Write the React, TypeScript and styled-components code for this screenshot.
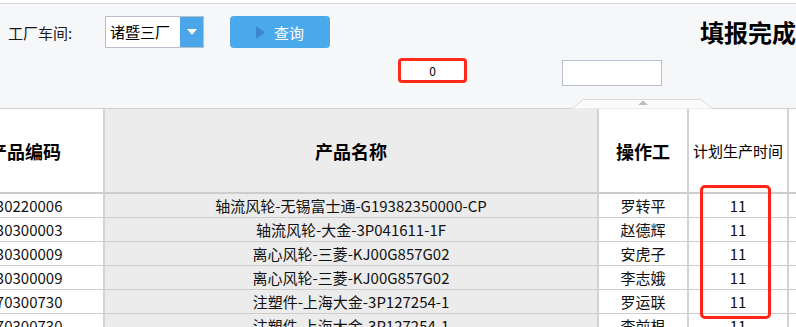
import React from 'react';
import styled, { createGlobalStyle } from 'styled-components';

const Global = createGlobalStyle`
  html, body { margin: 0; padding: 0; background: #ffffff; overflow: hidden; }
  body { font-family: "Noto Sans CJK SC", "Noto Sans", sans-serif; color: #111; }
`;

const Page = styled.div`
  position: relative;
  width: 796px;
  height: 327px;
  overflow: hidden;
  padding-top: 3px;
  box-sizing: border-box;
`;

const Panel = styled.div`
  position: relative;
  height: 106px;
  box-sizing: border-box;
  border-top: 1px solid #d6d8dd;
  border-bottom: 1px solid #cfcfcf;
  background: #f6f7f9;
  padding: 12px 0 0 8px;
  display: flex;
  flex-direction: column;
  gap: 10px;
`;

const TopRow = styled.div`
  display: flex;
  align-items: center;
  height: 32px;
  & > * { flex-shrink: 0; }
`;

const Label = styled.span`
  width: 97px;
  font-size: 15px;
  color: #1a1a1a;
  white-space: nowrap;
`;

const Select = styled.div`
  display: flex;
  width: 99px;
  height: 32px;
  box-sizing: border-box;
  border: 1px solid #b7bccb;
  background: #fff;
`;

const SelectText = styled.span`
  flex: 1;
  padding-left: 4px;
  font-size: 15px;
  line-height: 30px;
  color: #000;
  white-space: nowrap;
`;

const SelectArrow = styled.span`
  width: 23px;
  background: #4aa6e9;
  display: flex;
  align-items: center;
  justify-content: center;
`;

const QueryButton = styled.button`
  margin-left: 26px;
  width: 100px;
  height: 32px;
  border: none;
  border-radius: 4px;
  background: #4aa9ea;
  display: flex;
  align-items: center;
  justify-content: center;
  gap: 9px;
  padding: 0;
  font-family: inherit;
  font-size: 15px;
  color: #fff;
`;

const Heading = styled.h1`
  margin: 0 0 0 370px;
  font-size: 24px;
  font-weight: 700;
  color: #000;
  white-space: nowrap;
  line-height: 32px;
`;

const SecondRow = styled.div`
  display: flex;
  align-items: flex-start;
  padding-left: 390px;
  & > * { flex-shrink: 0; }
`;

const CountField = styled.div`
  width: 69px;
  height: 25px;
  box-sizing: border-box;
  border: 3px solid #ff2a1a;
  border-radius: 4px;
  background: #fff;
  font-size: 12px;
  line-height: 19px;
  text-align: center;
  color: #000;
`;

const BlankField = styled.div`
  margin-left: 95px;
  margin-top: 2px;
  width: 100px;
  height: 26px;
  box-sizing: border-box;
  border: 1px solid #b9bdcb;
  background: #fff;
`;

const Handle = styled.svg`
  position: absolute;
  left: 571px;
  bottom: -1px;
`;

const TableArea = styled.div`
  overflow: hidden;
`;

const Grid = styled.div`
  margin-left: -53px;
  width: 902px;
`;

const Row = styled.div<{ $header?: boolean }>`
  display: grid;
  grid-template-columns: 158px 494px 90px 100px 60px;
  height: ${(p) => (p.$header ? '85px' : '24px')};
`;

const Cell = styled.div<{ $gray?: boolean; $header?: boolean; $small?: boolean }>`
  box-sizing: border-box;
  border-right: 2px solid #d3d3d3;
  border-bottom: ${(p) => (p.$header ? '2px' : '1px')} solid #cdcdcd;
  background: ${(p) => (p.$gray ? '#ececec' : '#ffffff')};
  display: flex;
  align-items: center;
  justify-content: center;
  white-space: nowrap;
  overflow: hidden;
  font-size: ${(p) => (p.$header ? (p.$small ? '15px' : '18px') : '15px')};
  font-weight: ${(p) => (p.$header && !p.$small ? 700 : 400)};
  color: ${(p) => (p.$header ? '#000' : '#111')};
`;

const Highlight = styled.div`
  position: absolute;
  left: 700px;
  top: 185px;
  width: 71px;
  height: 134px;
  box-sizing: border-box;
  border: 3px solid #ff2418;
  border-radius: 5px;
  pointer-events: none;
`;

const rows = [
  ['130220006', '轴流风轮-无锡富士通-G19382350000-CP', '罗转平', '11'],
  ['130300003', '轴流风轮-大金-3P041611-1F', '赵德辉', '11'],
  ['130300009', '离心风轮-三菱-KJ00G857G02', '安虎子', '11'],
  ['130300009', '离心风轮-三菱-KJ00G857G02', '李志娥', '11'],
  ['170300730', '注塑件-上海大金-3P127254-1', '罗运联', '11'],
  ['170300730', '注塑件-上海大金-3P127254-1', '李前根', '11'],
];

export default function App() {
  return (
    <Page>
      <Global />
      <Panel>
        <TopRow>
          <Label>工厂车间:</Label>
          <Select>
            <SelectText>诸暨三厂</SelectText>
            <SelectArrow>
              <svg width="10" height="6" viewBox="0 0 10 6">
                <path d="M0 0 L10 0 L5 6 Z" fill="#ffffff" />
              </svg>
            </SelectArrow>
          </Select>
          <QueryButton>
            <svg width="9" height="13" viewBox="0 0 9 13">
              <path d="M0 0 L9 6.5 L0 13 Z" fill="#3d86cf" />
            </svg>
            <span>查询</span>
          </QueryButton>
          <Heading>填报完成情况</Heading>
        </TopRow>
        <SecondRow>
          <CountField>0</CountField>
          <BlankField />
        </SecondRow>
        <Handle width="143" height="10" viewBox="0 0 143 10">
          <path d="M0.5 10 L12.5 0.5 L129.5 0.5 L142.5 10 Z" fill="#fbfbfc" stroke="#dcdcdc" />
          <path d="M67 6 L72 1.5 L77 6 Z" fill="#bdbdbd" />
        </Handle>
      </Panel>
      <TableArea>
        <Grid>
          <Row $header>
            <Cell $header>产品编码</Cell>
            <Cell $header $gray>产品名称</Cell>
            <Cell $header>操作工</Cell>
            <Cell $header $small>计划生产时间</Cell>
            <Cell $header />
          </Row>
          {rows.map((r, i) => (
            <Row key={i}>
              <Cell>{r[0]}</Cell>
              <Cell $gray>{r[1]}</Cell>
              <Cell>{r[2]}</Cell>
              <Cell>{r[3]}</Cell>
              <Cell />
            </Row>
          ))}
        </Grid>
      </TableArea>
      <Highlight />
    </Page>
  );
}
